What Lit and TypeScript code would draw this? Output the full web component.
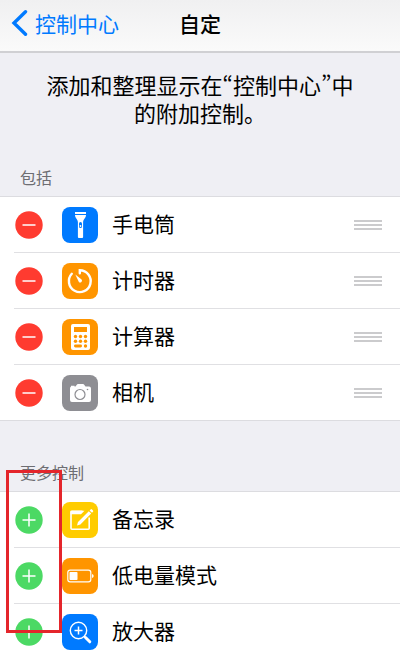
import { LitElement, html, css, svg } from "lit";
import { customElement, property } from "lit/decorators.js";

type Item = { id: string; label: string; tint: string };

const INCLUDED: Item[] = [
  { id: "torch", label: "手电筒", tint: "blue" },
  { id: "timer", label: "计时器", tint: "orange" },
  { id: "calculator", label: "计算器", tint: "orange" },
  { id: "camera", label: "相机", tint: "gray" },
];

const MORE: Item[] = [
  { id: "notes", label: "备忘录", tint: "yellow" },
  { id: "battery", label: "低电量模式", tint: "orange" },
  { id: "magnifier", label: "放大器", tint: "blue" },
];

const GLYPHS: Record<string, unknown> = {
  torch: svg`
    <path fill="#fff" d="M13 5h11v2H13zM13 8h11c0 3-2.6 4-2.9 7v15a1 1 0 0 1-1 1h-3.200a1 1 0 0 1-1-1V15C15.600 12 13 11 13 8z"/>
    <rect x="17" y="15" width="3" height="6" rx="1.500" fill="#007aff"/>
    <circle cx="18.500" cy="19" r="0.900" fill="#fff"/>`,
  timer: svg`
    <path fill="none" stroke="#fff" stroke-width="2.400" stroke-linecap="round" d="M17.800 10.200V7.300A10.900 10.900 0 1 1 9.800 10.800"/>
    <path fill="#fff" d="M13.300 11.500l6.300 5a1.900 1.900 0 0 1-2.600 2.700z"/>`,
  calculator: svg`
    <rect x="9" y="5" width="19" height="26" rx="2" fill="#fff"/>
    <g fill="#ff9500">
      <rect x="12" y="8" width="13" height="5"/>
      <circle cx="13.500" cy="17.500" r="1.700"/><circle cx="18.500" cy="17.500" r="1.700"/><circle cx="23.500" cy="17.500" r="1.700"/>
      <circle cx="13.500" cy="22.200" r="1.700"/><circle cx="18.500" cy="22.200" r="1.700"/><circle cx="23.500" cy="22.200" r="1.700"/>
      <rect x="12" y="25.500" width="8" height="3" rx="1.400"/><circle cx="23.500" cy="27" r="1.700"/>
    </g>`,
  camera: svg`
    <path fill="#fff" d="M9 11.500v-.8h3.500v.8h1l1.300-1.800q.4-.6 1.200-.6h5q.8 0 1.200.6l1.300 1.800H27q2 0 2 2V25q0 2-2 2H10q-2 0-2-2V13.500q0-1.500 1-2z"/>
    <circle cx="18" cy="19.500" r="5" fill="none" stroke="#8e8e93" stroke-width="1.200"/>
    <circle cx="25.500" cy="14.500" r="0.800" fill="#8e8e93"/>`,
  notes: svg`
    <path fill="none" stroke="#fff" stroke-width="1.600" d="M20.500 9.300H10q-1 0-1 1V26.200q0 1 1 1h16.200q1 0 1-1V15.500"/>
    <path fill="#fff" d="M8.500 8.800h14l-3.500 3.500H8.500zM16 20l10.800-10.800 2.400 2.400L18.400 22.400 15 23.400zM27.600 8.400l1-1q.7-.6 1.400 0l1 1q.6.700 0 1.400l-1 1z"/>`,
  battery: svg`
    <rect x="5.800" y="12.200" width="23" height="11.600" rx="2.400" fill="none" stroke="#fff" stroke-width="1.200"/>
    <rect x="7.500" y="14" width="8" height="8" rx="0.800" fill="#fff"/>
    <path fill="#fff" d="M30 16q1.700.6 1.700 2t-1.700 2z"/>`,
  magnifier: svg`
    <circle cx="16.500" cy="16.500" r="8.200" fill="none" stroke="#fff" stroke-width="1.400"/>
    <path fill="none" stroke="#fff" stroke-width="1.500" d="M16.500 12.500v8M12.500 16.500h8"/>
    <path fill="none" stroke="#fff" stroke-width="3" stroke-linecap="round" d="M23.500 23.500l4.300 4.300"/>
    <path fill="none" stroke="#fff" stroke-width="1.400" d="M22.200 22.200l2 2"/>`,
};

@customElement("control-row")
class ControlRow extends LitElement {
  @property({ attribute: false }) item!: Item;
  @property({ type: Boolean }) included = false;

  static styles = css`
    :host {
      display: flex;
      align-items: center;
      height: 55px;
      padding-left: 15px;
      padding-right: 18px;
    }
    button {
      border: 0;
      padding: 0;
      margin: 0;
      background: none;
      flex: none;
      cursor: pointer;
    }
    .toggle {
      width: 28px;
      height: 28px;
      margin-right: 19px;
    }
    svg {
      display: block;
    }
    .tile {
      flex: none;
      width: 36px;
      height: 36px;
      border-radius: 8px;
      margin-right: 14px;
    }
    .blue { background: #007aff; }
    .orange { background: #ff9500; }
    .gray { background: #8e8e93; }
    .yellow { background: #ffcc00; }
    .label {
      flex: 1;
      padding-bottom: 4px;
      font-size: 21px;
      line-height: 28px;
      color: #000;
    }
    .handle {
      display: flex;
      flex-direction: column;
      gap: 2px;
      width: 28px;
    }
    .bar {
      height: 2px;
      background: #cbcbcd;
    }
  `;

  render() {
    const { item, included } = this;
    return html`
      <button class="toggle" aria-label=${(included ? "移除" : "添加") + item.label}>
        <svg width="28" height="28" viewBox="0 0 28 28">
          <circle cx="14" cy="14" r="13.700" fill=${included ? "#ff3b30" : "#4cd964"} />
          <path d=${included ? "M7.500 14h13" : "M7.500 14h13M14 7.500v13"} stroke="#fff" stroke-width="1.500" />
        </svg>
      </button>
      <span class="tile ${item.tint}">
        <svg width="36" height="36" viewBox="0 0 36 36" aria-hidden="true">${GLYPHS[item.id]}</svg>
      </span>
      <span class="label">${item.label}</span>
      ${included
        ? html`<button class="handle" aria-label=${"移动" + item.label}>
            <span class="bar"></span><span class="bar"></span><span class="bar"></span>
          </button>`
        : ""}
    `;
  }
}

@customElement("app-root")
class AppRoot extends LitElement {
  static styles = css`
    :host {
      position: relative;
      display: flex;
      flex-direction: column;
      height: 100vh;
      background: #efeff4;
      color: #000;
      font-family: "Noto Sans CJK SC", sans-serif;
    }
    .nav {
      flex: none;
      display: grid;
      grid-template-columns: 1fr auto 1fr;
      align-items: center;
      padding: 9px 11px 14px;
      border-bottom: 2px solid #d0d0d3;
      background: linear-gradient(#f0f0f1, #fafafa);
      font-size: 21px;
      line-height: 28px;
    }
    .back {
      display: flex;
      align-items: center;
      gap: 7px;
      color: #007aff;
      text-decoration: none;
    }
    .title {
      margin: 0;
      font-size: 21px;
      font-weight: 500;
    }
    .content {
      flex: 1;
      min-height: 0;
      overflow-y: auto;
      scrollbar-width: none;
    }
    .intro {
      margin: 0;
      padding: 17px 40px 0;
      font-size: 22px;
      line-height: 28px;
      font-feature-settings: "pwid";
      text-align: center;
    }
    .group {
      position: relative;
    }
    .heading {
      margin: 0;
      padding: 41px 20px 9px;
      font-size: 16px;
      line-height: 20px;
      font-weight: 400;
      color: #6d6d72;
    }
    .list {
      list-style: none;
      margin: 0;
      padding: 0;
      background: #fff;
      border-top: 1px solid #dcdce0;
      border-bottom: 1px solid #dcdce0;
    }
    .entry + .entry::before {
      content: "";
      display: block;
      height: 1px;
      margin-left: 14px;
      background: #e0e0e3;
    }
    .marker {
      position: absolute;
      left: 6px;
      top: 49px;
      width: 56px;
      height: 163px;
      box-sizing: border-box;
      border: 3px solid #e4252b;
      pointer-events: none;
    }
    .shade {
      position: absolute;
      right: 12px;
      bottom: 0;
      width: 88px;
      height: 18px;
      background: radial-gradient(closest-side at 50% 100%, #f3f3f3, #f3f3f300);
      pointer-events: none;
    }
  `;

  private rows(items: Item[], included: boolean) {
    return html`<ul class="list">
      ${items.map(
        (item) => html`<li class="entry">
          <control-row .item=${item} ?included=${included}></control-row>
        </li>`
      )}
    </ul>`;
  }

  render() {
    return html`
      <header class="nav">
        <a class="back" href="#">
          <svg width="17" height="26" viewBox="0 0 17 26" aria-hidden="true">
            <path d="M14.500 1.800L3 13l11.500 11.200" fill="none" stroke="#007aff" stroke-width="3.400" stroke-linecap="round" stroke-linejoin="miter" />
          </svg>
          控制中心
        </a>
        <h1 class="title">自定</h1>
      </header>
      <main class="content">
        <p class="intro">添加和整理显示在“控制中心”中的附加控制。</p>
        <section class="group">
          <h2 class="heading">包括</h2>
          ${this.rows(INCLUDED, true)}
        </section>
        <section class="group">
          <h2 class="heading">更多控制</h2>
          ${this.rows(MORE, false)}
          <div class="marker"></div>
        </section>
      </main>
      <div class="shade"></div>
    `;
  }
}
